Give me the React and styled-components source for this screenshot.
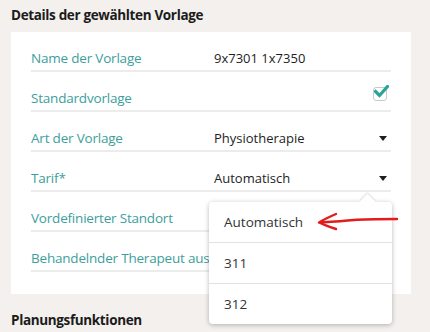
import styled, { createGlobalStyle } from 'styled-components';

const GlobalStyle = createGlobalStyle`
  body {
    margin: 0;
    background: #f3f0ed;
    font-family: "Open Sans", "Noto Sans", sans-serif;
  }
`;

const rows = [
  { label: 'Name der Vorlage', value: '9x7301 1x7350' },
  { label: 'Standardvorlage', check: true },
  { label: 'Art der Vorlage', value: 'Physiotherapie', select: true },
  { label: 'Tarif*', value: 'Automatisch', select: true, open: true },
  { label: 'Vordefinierter Standort' },
  { label: 'Behandelnder Therapeut aus' },
];

const options = ['Automatisch', '311', '312'];

const App = () => {
  return (
    <Page>
      <GlobalStyle />
      <SectionTitle>Details der gewählten Vorlage</SectionTitle>
      <Panel>
        {rows.map((r) => (
          <Row key={r.label}>
            <Label>{r.label}</Label>
            <Value>
              {r.value && <span>{r.value}</span>}
              {r.select && <Caret />}
              {r.check && (
                <CheckBox>
                  <svg width="15" height="13" viewBox="0 0 15 13">
                    <path d="M1.5 6.5 L5.5 10.5 L13.5 1.5" fill="none" stroke="#2aa39b" strokeWidth="3.2" strokeLinecap="square" />
                  </svg>
                </CheckBox>
              )}
              {r.open && (
                <Menu>
                  {options.map((o) => (
                    <MenuItem key={o}>{o}</MenuItem>
                  ))}
                </Menu>
              )}
            </Value>
          </Row>
        ))}
      </Panel>
      <SectionTitle>Planungsfunktionen</SectionTitle>
      <Annotation width="90" height="22" viewBox="0 0 90 22">
        <path d="M88 9 C70 9 55 9 45 10 C35 11 20 12 12 12.5" fill="none" stroke="#e31b1b" strokeWidth="2.4" strokeLinecap="round" />
        <path d="M27 4 C20 7 14 10 10 12.5 C15 15 21 17 27 19" fill="none" stroke="#e31b1b" strokeWidth="2.4" strokeLinecap="round" strokeLinejoin="round" />
      </Annotation>
    </Page>
  );
};

const Page = styled.div`
  position: relative;
  width: 430px;
  height: 332px;
  overflow: hidden;
  padding: 5px 0 0 11px;
  box-sizing: border-box;
`;

const SectionTitle = styled.h2`
  margin: 0;
  font-size: 13.5px;
  line-height: 20px;
  font-weight: 700;
  color: #1b1b1b;
  letter-spacing: -0.35px;

  & + div {
    margin-top: 7px;
  }
`;

const Panel = styled.div`
  width: 400px;
  background: #ffffff;
  padding: 0 20px 22px;
  box-sizing: border-box;
  margin-bottom: 16px;
`;

const Row = styled.div`
  display: flex;
  height: 40px;
  align-items: flex-end;
  border-bottom: 2px solid #ececec;
  box-sizing: border-box;
  padding-bottom: 2px;
  line-height: 20px;
`;

const Label = styled.div`
  width: 183px;
  color: #3d9e9c;
  font-size: 13.5px;
  letter-spacing: -0.2px;
  white-space: nowrap;
`;

const Value = styled.div`
  position: relative;
  flex: 1;
  display: flex;
  align-items: center;
  justify-content: space-between;
  color: #1e1e1e;
  font-size: 13px;
  height: 20px;
`;

const Caret = styled.span`
  width: 0;
  height: 0;
  border-left: 4px solid transparent;
  border-right: 4px solid transparent;
  border-top: 5px solid #1e1e1e;
  margin-right: 4px;
`;

const CheckBox = styled.span`
  position: relative;
  margin-left: auto;
  margin-right: 4px;
  margin-top: -9px;
  width: 12px;
  height: 12px;
  border: 1px solid #c9c9c9;
  border-radius: 3px;

  svg {
    position: absolute;
    left: 0;
    top: -3px;
  }
`;

const Menu = styled.div`
  position: absolute;
  left: -5px;
  top: 34px;
  width: 183px;
  background: #ffffff;
  border-radius: 4px;
  box-shadow: 0 1px 5px rgba(0, 0, 0, 0.28);
  z-index: 2;

  &::before {
    content: '';
    position: absolute;
    top: -6px;
    right: 19px;
    width: 11px;
    height: 11px;
    background: #ffffff;
    transform: rotate(45deg);
    box-shadow: -1px -1px 2px rgba(0, 0, 0, 0.12);
  }
`;

const MenuItem = styled.div`
  position: relative;
  height: 40px;
  line-height: 40px;
  padding-left: 15px;
  font-size: 13.5px;
  color: #333333;
  border-top: 1px solid #e2e2e2;

  &:first-child {
    border-top: none;
  }
`;

const Annotation = styled.svg`
  position: absolute;
  left: 309px;
  top: 210px;
  z-index: 3;
`;

export default App;
